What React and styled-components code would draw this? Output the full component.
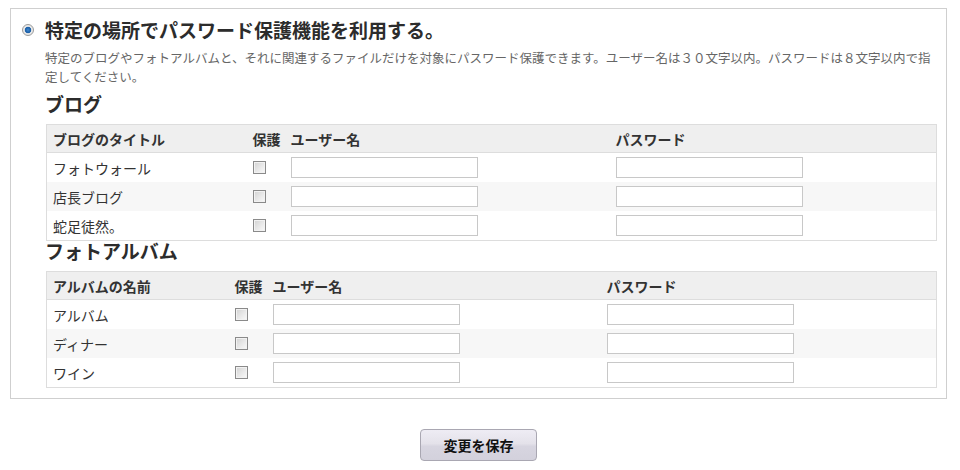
import React from "react";
import styled, { createGlobalStyle } from "styled-components";

const GlobalStyle = createGlobalStyle`
  html, body { margin: 0; padding: 0; background: #fff; }
  body {
    font-family: "Noto Sans CJK JP", "Noto Sans", sans-serif;
    color: #333;
  }
  * { box-sizing: border-box; }
`;

const Page = styled.div`
  padding: 8px 13px 0 10px;
  width: 960px;
`;

const Box = styled.div`
  border: 1px solid #cfcfcf;
  padding: 7px 10px 10px 11px;
  display: flex;
  align-items: flex-start;
`;

const RadioCol = styled.div`
  width: 24px;
  flex: none;
  padding-top: 8px;
`;

const Radio = styled.span`
  display: block;
  width: 12px;
  height: 12px;
  border-radius: 50%;
  border: 1px solid #9a9a9a;
  background: radial-gradient(circle at 50% 50%, #3f8ad0 0, #1d5fa8 2.5px, #2f6fb0 3px, #e8e8e8 3.6px, #ffffff 6px);
  box-shadow: inset 0 0 1px rgba(0, 0, 0, 0.2);
`;

const Content = styled.div`
  flex: 1;
  min-width: 0;
`;

const Title = styled.h1`
  margin: 0 0 0 -1px;
  font-size: 19px;
  line-height: 28px;
  font-weight: bold;
  color: #2c2c2c;
`;

const Description = styled.p`
  margin: 4px 0 0 -1px;
  font-size: 12.5px;
  line-height: 19px;
  color: #666;
`;

const SectionTitle = styled.h2`
  margin: ${(p) => (p.$first ? "8px" : "0")} 0 10px -1px;
  font-size: 19px;
  line-height: 20px;
  font-weight: bold;
  color: #2c2c2c;
`;

const Table = styled.table`
  width: 890px;
  border-collapse: collapse;
  table-layout: fixed;
  border: 1px solid #ddd;
  font-size: 14px;
`;

const HeadCell = styled.th`
  box-sizing: content-box;
  background: #efefef;
  height: 27px;
  padding: 0 6px;
  text-align: left;
  font-weight: bold;
  color: #333;
  border-bottom: 1px solid #ddd;
  white-space: nowrap;
  line-height: 20px;
`;

const Row = styled.tr`
  background: ${(p) => (p.$alt ? "#f7f7f7" : "#fff")};
`;

const Cell = styled.td`
  box-sizing: content-box;
  height: 29px;
  padding: 0 6px;
  vertical-align: middle;
  color: #333;
  line-height: 20px;
  white-space: nowrap;
`;

const Check = styled.input.attrs({ type: "checkbox" })`
  appearance: none;
  -webkit-appearance: none;
  display: block;
  margin: 0;
  width: 13px;
  height: 13px;
  border: 1px solid #8a8a8a;
  background: linear-gradient(135deg, #d2d2d2 0%, #e9e9e9 55%, #fafafa 100%);
  box-shadow: inset 0 0 0 1px #f2f2f2;
`;

const TextInput = styled.input`
  display: block;
  width: 187px;
  height: 21px;
  margin: 0;
  border: 1px solid #c8c8c8;
  background: #fff;
  padding: 0 4px;
  font-family: inherit;
  font-size: 13px;
`;

const Footer = styled.div`
  display: flex;
  justify-content: center;
  padding: 30px 0 0;
  width: 937px;
`;

const SaveButton = styled.button`
  width: 117px;
  height: 32px;
  border: 1px solid #a9a7b2;
  border-radius: 4px;
  background: linear-gradient(to bottom, #eeecf4 0%, #e4e2ea 45%, #d7d5e0 55%, #d3d1dc 100%);
  font-family: inherit;
  font-size: 14px;
  font-weight: bold;
  color: #111;
  padding: 0;
  cursor: pointer;
`;

const blogs = ["フォトウォール", "店長ブログ", "蛇足徒然。"];
const albums = ["アルバム", "ディナー", "ワイン"];

function ProtectTable({ nameLabel, items, widths }) {
  return (
    <Table>
      <colgroup>
        {widths.map((w, i) => (
          <col key={i} style={{ width: w }} />
        ))}
      </colgroup>
      <thead>
        <tr>
          <HeadCell>{nameLabel}</HeadCell>
          <HeadCell>保護</HeadCell>
          <HeadCell>ユーザー名</HeadCell>
          <HeadCell>パスワード</HeadCell>
        </tr>
      </thead>
      <tbody>
        {items.map((name, i) => (
          <Row key={name} $alt={i % 2 === 1}>
            <Cell>{name}</Cell>
            <Cell>
              <Check />
            </Cell>
            <Cell>
              <TextInput type="text" />
            </Cell>
            <Cell>
              <TextInput type="password" />
            </Cell>
          </Row>
        ))}
      </tbody>
    </Table>
  );
}

export default function App() {
  return (
    <>
      <GlobalStyle />
      <Page>
        <Box>
          <RadioCol>
            <Radio />
          </RadioCol>
          <Content>
            <Title>特定の場所でパスワード保護機能を利用する。</Title>
            <Description>
              特定のブログやフォトアルバムと、それに関連するファイルだけを対象にパスワード保護できます。ユーザー名は３０文字以内。パスワードは８文字以内で指定してください。
            </Description>
            <SectionTitle $first>ブログ</SectionTitle>
            <ProtectTable
              nameLabel="ブログのタイトル"
              items={blogs}
              widths={[200, 38, 325, 327]}
            />
            <SectionTitle>フォトアルバム</SectionTitle>
            <ProtectTable
              nameLabel="アルバムの名前"
              items={albums}
              widths={[182, 38, 334, 336]}
            />
          </Content>
        </Box>
        <Footer>
          <SaveButton type="button">変更を保存</SaveButton>
        </Footer>
      </Page>
    </>
  );
}
